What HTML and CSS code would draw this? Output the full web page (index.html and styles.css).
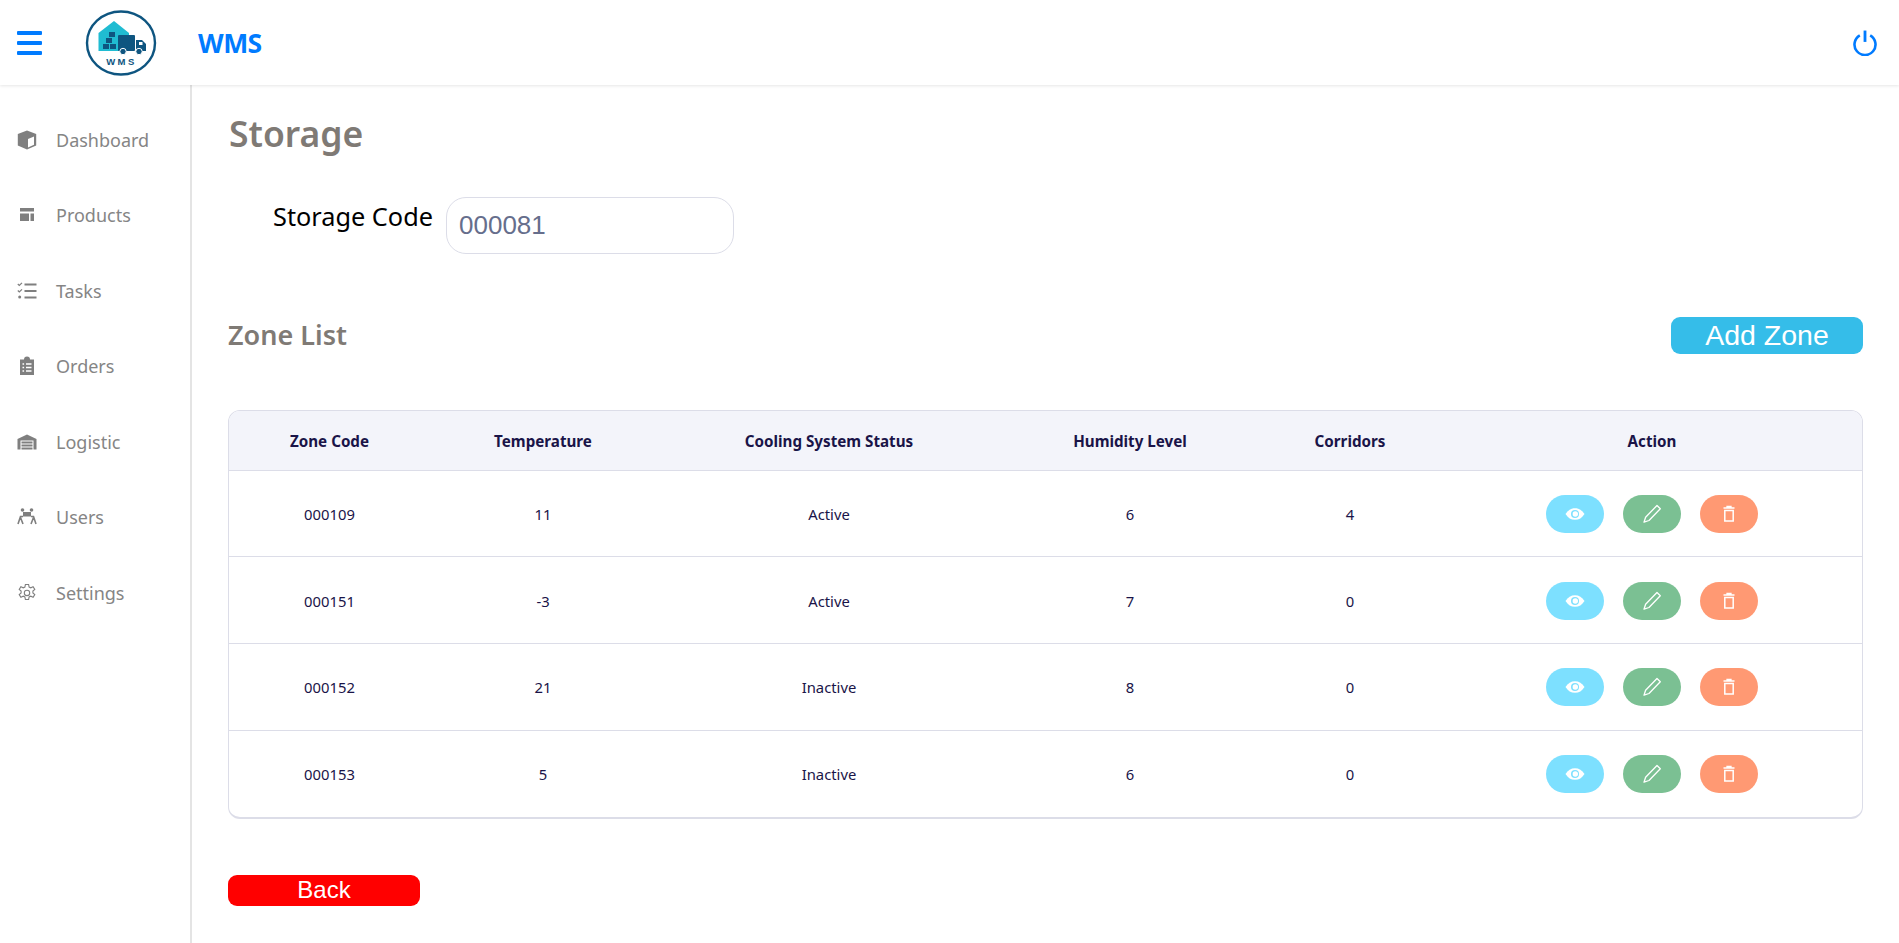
FILE: index.html
```html
<!DOCTYPE html>
<html lang="en">
<head>
<meta charset="utf-8">
<title>WMS</title>
<link rel="stylesheet" href="styles.css">
</head>
<body>
<header class="topbar">
  <div class="burger"><span></span><span></span><span></span></div>
  <svg class="logo" viewBox="84 9 72 66" width="72" height="66">
    <ellipse cx="120" cy="42" rx="34" ry="31.500" fill="#fff" stroke="#0e5580" stroke-width="2.400"/>
    <path d="M97.500 32 113 20 128 32 V50 H97.500 Z" fill="#20bcd2"/>
    <rect x="102" y="43" width="6" height="5" fill="#0e5580"/>
    <rect x="109" y="43" width="6" height="5" fill="#0e5580"/>
    <rect x="105" y="37" width="6" height="5" fill="#0e5580"/>
    <rect x="108" y="31" width="6" height="5" fill="#0e5580"/>
    <rect x="117" y="34" width="17" height="16" rx="1" fill="#0e5580"/>
    <path d="M135 39 H141 L145 43 V50 H135 Z" fill="#0e5580"/>
    <rect x="138" y="41" width="3.500" height="3" fill="#fff"/>
    <circle cx="122" cy="50.500" r="3.200" fill="#0e5580" stroke="#fff"/>
    <circle cx="138" cy="50.500" r="3.200" fill="#0e5580" stroke="#fff"/>
    <text x="120.500" y="64" class="logo-text" text-anchor="middle">WMS</text>
  </svg>
  <div class="brand">WMS</div>
  <svg class="power" viewBox="0 0 24 24" width="26" height="26"><path d="M7.200 5a9.700 9.700 0 1 0 9.600 0" fill="none" stroke="#007bff" stroke-width="2.400"/><path d="M12 .5v10.500" stroke="#007bff" stroke-width="2.600"/></svg>
</header>
<div class="shell">
  <nav class="sidebar">
    <a class="nav-item"><svg class="nav-icon" viewBox="0 0 20 20"><path d="M10 .5.800 4v11.500L10 19.500l9.200-4V4z" fill="#7f7f7f"/><path d="M11 9v8.500l6-2.800V6.500z" fill="#fff"/></svg><span>Dashboard</span></a>
    <a class="nav-item"><svg class="nav-icon" viewBox="0 0 20 20"><rect x="3" y="3" width="14" height="3.500" fill="#7f7f7f"/><rect x="3" y="8.500" width="9" height="7.500" fill="#7f7f7f"/><rect x="13.500" y="8.500" width="3.500" height="7.500" fill="#7f7f7f"/></svg><span>Products</span></a>
    <a class="nav-item"><svg class="nav-icon" viewBox="0 0 20 20"><path d="M.8 3l1.500 1.500L5 1.800M.8 9.500 2.300 11 5 8.300" fill="none" stroke="#7f7f7f" stroke-width="1.200"/><circle cx="2.700" cy="16" r="1.500" fill="#7f7f7f"/><path d="M7.500 3.500H19.500M7.500 10H19.500M7.500 16.500H19.500" stroke="#7f7f7f" stroke-width="1.800"/></svg><span>Tasks</span></a>
    <a class="nav-item"><svg class="nav-icon" viewBox="0 0 20 20"><path d="M3 3.500h4a3 3 0 0 1 6 0h4V19H3z" fill="#7f7f7f"/><path d="M5.500 8h1.600M9 8h5.500M5.500 11.500h1.600M9 11.500h5.500M5.500 15h1.600M9 15h5.500" stroke="#fff" stroke-width="1.300"/></svg><span>Orders</span></a>
    <a class="nav-item"><svg class="nav-icon" viewBox="0 0 20 20"><path d="M.5 7 10 2.500 19.500 7V17.500H16.500V8.500H3.500V17.500H.5Z" fill="#7f7f7f"/><path d="M4.500 10.500h11M4.500 13.500h11M4.500 16.500h11" stroke="#7f7f7f" stroke-width="2"/></svg><span>Logistic</span></a>
    <a class="nav-item"><svg class="nav-icon" viewBox="0 0 20 20"><circle cx="5.500" cy="3" r="1.800" fill="#7f7f7f"/><circle cx="14.500" cy="3" r="1.800" fill="#7f7f7f"/><rect x="6" y="5" width="8" height="4.500" fill="#7f7f7f"/><path d="M6 9.500H3.500L1 17M3.500 10.500 6 17M14 9.500h2.500L19 17M16.500 10.500 14 17" fill="none" stroke="#7f7f7f" stroke-width="1.600"/></svg><span>Users</span></a>
    <a class="nav-item"><svg class="nav-icon" viewBox="0 0 20 20"><path d="M8.400 1.500h3.200l.5 2.500 1.700.8 2.300-1.100 1.700 2.800-1.900 1.600v1.800l1.900 1.600-1.700 2.800-2.300-1.100-1.700.8-.5 2.500H8.400l-.5-2.500-1.700-.8-2.300 1.100-1.700-2.800 1.900-1.600V8.100L2.200 6.500l1.700-2.800 2.300 1.100 1.700-.8z" fill="none" stroke="#7f7f7f" stroke-width="1.100"/><circle cx="10" cy="9.900" r="2.700" fill="none" stroke="#7f7f7f" stroke-width="1.100"/></svg><span>Settings</span></a>
  </nav>
  <main class="content">
    <h1 class="page-title">Storage</h1>
    <div class="code-row">
      <label class="code-label">Storage Code</label>
      <input class="code-input" value="000081">
    </div>
    <div class="list-head">
      <h2 class="list-title">Zone List</h2>
      <button class="add-btn">Add Zone</button>
    </div>
    <div class="table-wrap">
      <table class="zones">
        <colgroup><col class="c1"><col class="c2"><col class="c3"><col class="c4"><col class="c5"><col class="c6"></colgroup>
        <thead>
          <tr><th>Zone Code</th><th>Temperature</th><th>Cooling System Status</th><th>Humidity Level</th><th>Corridors</th><th>Action</th></tr>
        </thead>
        <tbody>
          <tr><td>000109</td><td>11</td><td>Active</td><td>6</td><td>4</td><td><div class="actions"><button class="act view"><svg viewBox="0 0 20 20" width="20" height="20"><use href="#eye"/></svg></button><button class="act edit"><svg viewBox="0 0 20 20" width="20" height="20"><use href="#pen"/></svg></button><button class="act del"><svg viewBox="0 0 20 20" width="20" height="20"><use href="#bin"/></svg></button></div></td></tr>
          <tr><td>000151</td><td>-3</td><td>Active</td><td>7</td><td>0</td><td><div class="actions"><button class="act view"><svg viewBox="0 0 20 20" width="20" height="20"><use href="#eye"/></svg></button><button class="act edit"><svg viewBox="0 0 20 20" width="20" height="20"><use href="#pen"/></svg></button><button class="act del"><svg viewBox="0 0 20 20" width="20" height="20"><use href="#bin"/></svg></button></div></td></tr>
          <tr><td>000152</td><td>21</td><td>Inactive</td><td>8</td><td>0</td><td><div class="actions"><button class="act view"><svg viewBox="0 0 20 20" width="20" height="20"><use href="#eye"/></svg></button><button class="act edit"><svg viewBox="0 0 20 20" width="20" height="20"><use href="#pen"/></svg></button><button class="act del"><svg viewBox="0 0 20 20" width="20" height="20"><use href="#bin"/></svg></button></div></td></tr>
          <tr><td>000153</td><td>5</td><td>Inactive</td><td>6</td><td>0</td><td><div class="actions"><button class="act view"><svg viewBox="0 0 20 20" width="20" height="20"><use href="#eye"/></svg></button><button class="act edit"><svg viewBox="0 0 20 20" width="20" height="20"><use href="#pen"/></svg></button><button class="act del"><svg viewBox="0 0 20 20" width="20" height="20"><use href="#bin"/></svg></button></div></td></tr>
        </tbody>
      </table>
    </div>
    <button class="back-btn">Back</button>
  </main>
</div>
<svg class="defs" width="0" height="0">
  <symbol id="eye" viewBox="0 0 20 20"><path d="M.5 10C3 6 6 4.200 10 4.200S17 6 19.500 10C17 14 14 15.800 10 15.800S3 14 .5 10Z" fill="#fff"/><circle cx="10" cy="10" r="4" fill="#7de0ff"/><circle cx="10.300" cy="10" r="2.700" fill="#fff"/></symbol>
  <symbol id="pen" viewBox="0 0 20 20"><path d="M15 1.500 18.300 4.800 7 16.500l-5 1.700 1.600-5Z" fill="none" stroke="#fff" stroke-width="1.300" stroke-linejoin="round"/></symbol>
  <symbol id="bin" viewBox="0 0 20 20"><path d="M4.500 4h11M8 3.500V2.500h4v1" fill="none" stroke="#fff" stroke-width="1.300"/><rect x="5.800" y="6.500" width="8.400" height="10.500" fill="none" stroke="#fff" stroke-width="1.500"/></symbol>
</svg>
</body>
</html>
```

FILE: styles.css
```css
* { box-sizing: border-box; }
html, body { margin: 0; height: 100%; }
body { font-family: "Noto Sans", "Open Sans", sans-serif; background: #fff; color: #000; overflow: hidden; }
.defs { position: absolute; }
.topbar { height: 85px; display: flex; align-items: center; padding-left: 17px; padding-right: 21px; box-shadow: 0 1px 3px rgba(0,0,0,.1); position: relative; background: #fff; }
.burger { width: 25px; display: flex; flex-direction: column; gap: 6px; }
.burger span { height: 4px; background: #007bff; border-radius: 1px; }
.logo { margin-left: 43px; }
.logo-text { font-family: "Liberation Sans", sans-serif; font-size: 9.500px; font-weight: 700; letter-spacing: 2.500px; fill: #0e5580; }
.brand { margin-left: 41px; color: #007bff; font-size: 26.500px; font-weight: 700; letter-spacing: -.5px; }
.power { margin-left: auto; }
.shell { display: flex; height: 858px; }
.sidebar { width: 192px; flex: none; border-right: 2px solid #e4e4e4; padding-top: 17px; }
.nav-item { display: flex; align-items: center; height: 75.500px; padding-left: 17px; color: #858585; font-size: 18px; }
.nav-icon { width: 20px; height: 20px; margin-right: 19px; flex: none; }
.content { flex: 1; min-width: 0; padding: 0 36px 0 36px; }
.page-title { margin: 22px 0 0 1px; color: #7f7a75; font-size: 35.500px; font-weight: 600; line-height: 52px; }
.code-row { display: flex; margin-top: 38px; align-items: flex-start; }
.code-label { margin-left: 45px; width: 173px; font-size: 25.300px; line-height: 38px; white-space: nowrap; }
.code-input { width: 288px; height: 57px; border: 1px solid #dcdde8; border-radius: 20px; padding: 0 12px; font-family: "Liberation Sans", sans-serif; font-size: 26px; color: #666e8c; background: #fff; outline: none; }
.list-head { display: flex; justify-content: space-between; align-items: center; margin-top: 63px; height: 37px; }
.list-title { margin: -2px 0 0; color: #7f7a75; font-size: 27px; font-weight: 600; }
.add-btn { width: 192px; height: 37px; border: 0; border-radius: 9px; background: #35bde9; color: #fff; font-family: "Liberation Sans", sans-serif; font-size: 28.500px; padding: 0; }
.table-wrap { margin-top: 56px; border: 1px solid #dcdde8; border-bottom-width: 2px; border-radius: 12px; overflow: hidden; }
.zones { width: 100%; border-collapse: collapse; table-layout: fixed; font-size: 14.800px; color: #1a1448; text-align: center; }
.c1 { width: 201px; } .c2 { width: 226px; } .c3 { width: 346px; } .c4 { width: 256px; } .c5 { width: 184px; } .c6 { width: 420px; }
.zones th { height: 59px; background: #f3f4fa; font-weight: 700; font-size: 15.200px; border-bottom: 1px solid #dcdde8; padding: 1px 0 0; }
.zones td { height: 86.700px; border-bottom: 1px solid #dcdde8; padding: 1px 0 0; }
.zones tr:last-child td { border-bottom: 0; }
.actions { display: flex; justify-content: center; gap: 19px; }
.act { width: 58px; height: 38px; border: 0; border-radius: 19px; display: flex; align-items: center; justify-content: center; padding: 0; }
.view { background: #7de0ff; }
.edit { background: #7bc093; }
.del { background: #ff9973; }
.back-btn { display: block; margin-top: 56px; width: 192px; height: 31px; border: 0; border-radius: 9px; background: #ff0000; color: #fff; font-family: "Liberation Sans", sans-serif; font-size: 24px; padding: 0; line-height: 30px; }
```
